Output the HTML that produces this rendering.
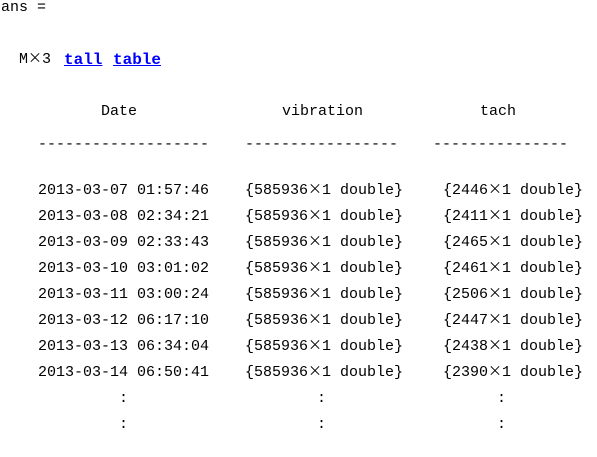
<!DOCTYPE html>
<html><head><style>
body{margin:0;width:597px;height:457px;background:#fff;overflow:hidden;position:relative;font-family:"Liberation Mono","Noto Sans CJK SC",monospace;font-size:15px;color:#000}
div{position:absolute;white-space:pre;line-height:18px}
a{color:#00f;text-decoration:underline;font-weight:bold;font-size:16px}
.x{font-family:"Noto Sans CJK SC",sans-serif;font-size:14px;line-height:0}
</style></head><body>
<div style="left:1px;top:-1px">ans =</div>
<div style="left:19px;top:51px">M<span class="x">×</span>3</div>
<div style="left:64px;top:51px"><a>tall</a></div>
<div style="left:113px;top:51px"><a>table</a></div>
<div style="left:101px;top:103px">Date</div>
<div style="left:282px;top:103px">vibration</div>
<div style="left:480px;top:103px">tach</div>
<div style="left:38px;top:136px">-------------------</div>
<div style="left:245px;top:136px">-----------------</div>
<div style="left:433px;top:136px">---------------</div>
<div style="left:38px;top:178px;line-height:26px">2013-03-07 01:57:46
2013-03-08 02:34:21
2013-03-09 02:33:43
2013-03-10 03:01:02
2013-03-11 03:00:24
2013-03-12 06:17:10
2013-03-13 06:34:04
2013-03-14 06:50:41</div>
<div style="left:245px;top:178px;line-height:26px">{585936<span class="x">×</span>1 double}
{585936<span class="x">×</span>1 double}
{585936<span class="x">×</span>1 double}
{585936<span class="x">×</span>1 double}
{585936<span class="x">×</span>1 double}
{585936<span class="x">×</span>1 double}
{585936<span class="x">×</span>1 double}
{585936<span class="x">×</span>1 double}</div>
<div style="left:443px;top:178px;line-height:26px">{2446<span class="x">×</span>1 double}
{2411<span class="x">×</span>1 double}
{2465<span class="x">×</span>1 double}
{2461<span class="x">×</span>1 double}
{2506<span class="x">×</span>1 double}
{2447<span class="x">×</span>1 double}
{2438<span class="x">×</span>1 double}
{2390<span class="x">×</span>1 double}</div>
<div style="left:119px;top:386px;line-height:26px">:
:</div>
<div style="left:317px;top:386px;line-height:26px">:
:</div>
<div style="left:497px;top:386px;line-height:26px">:
:</div>
</body></html>
